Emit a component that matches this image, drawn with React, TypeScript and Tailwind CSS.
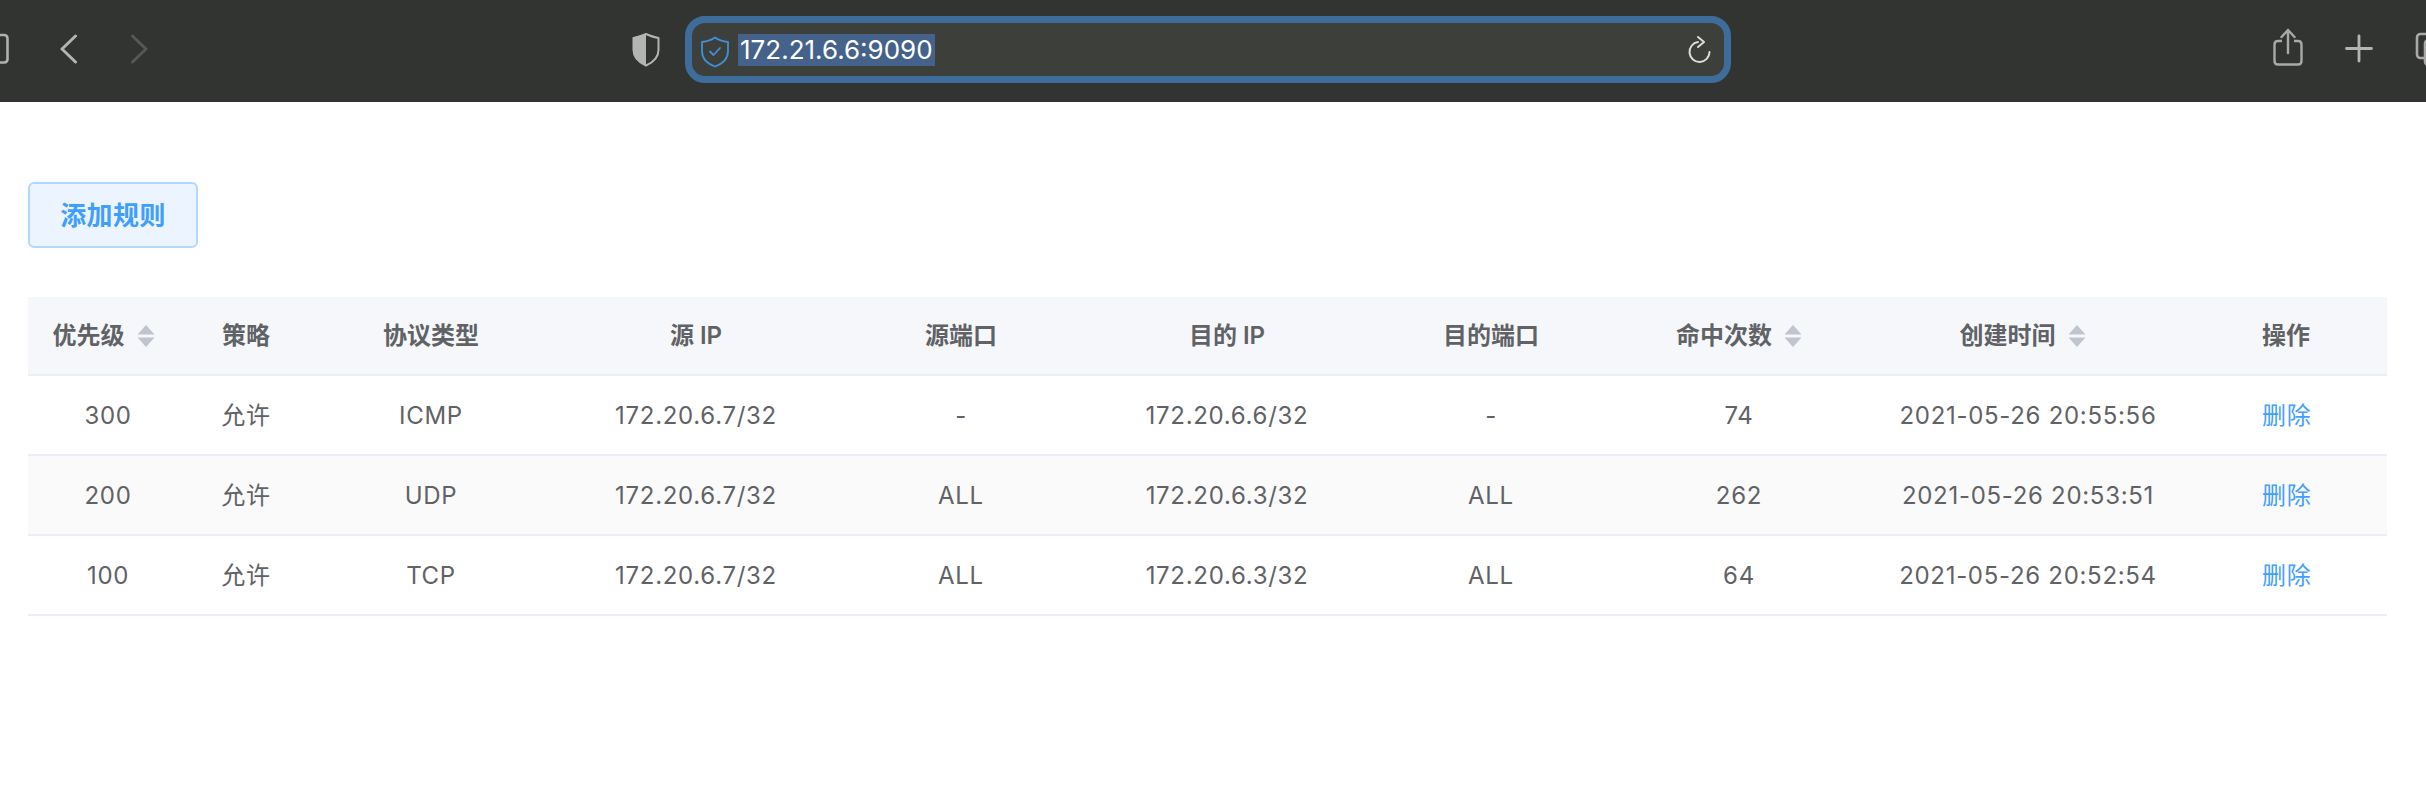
const rows = [
  { priority: 300, protocol: "ICMP", port: "-", dest: "172.20.6.6/32", hits: 74, time: "2021-05-26 20:55:56" },
  { priority: 200, protocol: "UDP", port: "ALL", dest: "172.20.6.3/32", hits: 262, time: "2021-05-26 20:53:51" },
  { priority: 100, protocol: "TCP", port: "ALL", dest: "172.20.6.3/32", hits: 64, time: "2021-05-26 20:52:54" },
];

function SortIcon() {
  return (
    <svg width="18" height="24" viewBox="0 0 18 24" className="ml-[12px] inline-block shrink-0">
      <path d="M9 1 L17.5 10.5 L0.5 10.5 Z" fill="#c0c4cc" />
      <path d="M9 23 L17.5 13.5 L0.5 13.5 Z" fill="#c0c4cc" />
    </svg>
  );
}

// toolbar icons use page y coordinates in a 102px tall viewBox
function Toolbar() {
  return (
    <div className="flex h-[102px] items-start overflow-hidden bg-[#323431]">
      <svg width="9" height="102" viewBox="0 0 9 102" className="shrink-0">
        <path d="M-6 35 H4 Q7.5 35 7.5 38.5 V59 Q7.5 62.5 4 62.5 H-6" fill="none" stroke="#b0b1ae" strokeWidth="2.6" />
      </svg>
      <svg width="18" height="102" viewBox="0 0 18 102" className="ml-[51px] shrink-0">
        <path d="M15.5 36 L2 49 L15.5 62" fill="none" stroke="#b4b5b2" strokeWidth="3" strokeLinecap="round" strokeLinejoin="round" />
      </svg>
      <svg width="18" height="102" viewBox="0 0 18 102" className="ml-[52px] shrink-0">
        <path d="M2.5 36 L16 49 L2.5 62" fill="none" stroke="#565855" strokeWidth="3" strokeLinecap="round" strokeLinejoin="round" />
      </svg>
      <svg width="28" height="102" viewBox="0 0 28 102" className="ml-[484px] shrink-0">
        <path d="M14 34 C18 36 22 37 26.5 38 V50 C26.5 57 22 62 14 65.5 C6 62 1.5 57 1.5 50 V38 C6 37 10 36 14 34 Z" fill="none" stroke="#b4b5b2" strokeWidth="2" strokeLinejoin="round" />
        <path d="M14 34 C10 36 6 37 1.5 38 V50 C1.5 57 6 62 14 65.5 Z" fill="#b4b5b2" />
      </svg>
      <div className="ml-[25px] mt-[16px] flex h-[67px] w-[1046px] shrink-0 items-center rounded-[20px] border-[7px] border-[#3f6d9b] bg-[#3d3f3b] pl-[9px] pr-[12px]">
        <svg width="28" height="32" viewBox="0 0 28 32" className="mt-[5px] shrink-0">
          <path d="M14 1.5 C18 4.5 22 5.5 27 6 V15 C27 23 21 28 14 30.5 C7 28 1 23 1 15 V6 C6 5.5 10 4.5 14 1.5 Z" fill="none" stroke="#3a92d8" strokeWidth="1.8" strokeLinejoin="round" />
          <path d="M9 15.5 L12.5 19 L19 12" fill="none" stroke="#3a92d8" strokeWidth="1.8" strokeLinecap="round" strokeLinejoin="round" />
        </svg>
        <span className="ml-[9px] bg-[#44628a] px-[2px] text-[26px] leading-[32px] text-white">172.21.6.6:9090</span>
        <svg width="24" height="30" viewBox="0 0 24 30" className="ml-auto shrink-0">
          <path d="M10 7 A10 10 0 1 0 21.5 17" fill="none" stroke="#dcdcda" strokeWidth="2" strokeLinecap="round" />
          <path d="M10 2 L16 7 L10 12" fill="none" stroke="#dcdcda" strokeWidth="2" strokeLinecap="round" strokeLinejoin="round" />
        </svg>
      </div>
      <svg width="30" height="102" viewBox="0 0 30 102" className="ml-[542px] shrink-0">
        <path d="M9 41 H5 Q1.5 41 1.5 44.5 V61 Q1.5 64.5 5 64.5 H25 Q28.5 64.5 28.5 61 V44.5 Q28.5 41 25 41 H21" fill="none" stroke="#a9aaa7" strokeWidth="2.4" />
        <path d="M15 53 V30 M8.5 37 L15 30 L21.5 37" fill="none" stroke="#a9aaa7" strokeWidth="2.4" strokeLinecap="round" strokeLinejoin="round" />
      </svg>
      <svg width="28" height="102" viewBox="0 0 28 102" className="ml-[42px] shrink-0">
        <path d="M14 36 V61 M1.5 48.5 H26.5" fill="none" stroke="#b4b5b2" strokeWidth="2.8" strokeLinecap="round" />
      </svg>
      <svg width="14" height="102" viewBox="0 0 14 102" className="ml-[42px] shrink-0">
        <rect x="2" y="34" width="24" height="24" rx="3.5" fill="none" stroke="#a9aaa7" strokeWidth="2.6" />
        <rect x="10" y="40" width="24" height="25" rx="3.5" fill="#323431" stroke="#a9aaa7" strokeWidth="2.6" />
      </svg>
    </div>
  );
}

export default function App() {
  return (
    <div className="h-[790px] w-[2426px] overflow-hidden bg-white font-['Inter','Noto_Sans_CJK_SC',sans-serif]">
      <Toolbar />
      <div className="pl-[28px] pr-[39px] pt-[80px]">
        <button className="flex h-[66px] w-[170px] items-center justify-center rounded-[6px] border-2 border-[#b3d8ff] bg-[#ecf5ff] text-[26px] font-semibold tracking-[0.4px] text-[#409eff]">
          添加规则
        </button>
        <table className="mt-[49px] w-full table-fixed border-collapse text-center text-[24px] text-[#606266]">
          <colgroup>
            <col className="w-[160px]" />
            <col className="w-[116px]" />
            <col className="w-[254px]" />
            <col className="w-[276px]" />
            <col className="w-[254px]" />
            <col className="w-[278px]" />
            <col className="w-[250px]" />
            <col className="w-[246px]" />
            <col className="w-[332px]" />
            <col />
          </colgroup>
          <thead>
            <tr className="h-[78px] border-b-2 border-[#ebeef5] bg-[#f5f7fa]">
              <th className="pr-[9px] font-semibold"><span className="inline-flex items-center">优先级<SortIcon /></span></th>
              <th className="font-semibold">策略</th>
              <th className="font-semibold">协议类型</th>
              <th className="font-semibold">源 IP</th>
              <th className="font-semibold">源端口</th>
              <th className="font-semibold">目的 IP</th>
              <th className="font-semibold">目的端口</th>
              <th className="font-semibold"><span className="inline-flex items-center">命中次数<SortIcon /></span></th>
              <th className="pr-[11px] font-semibold"><span className="inline-flex items-center">创建时间<SortIcon /></span></th>
              <th className="pl-[68px] text-left font-semibold">操作</th>
            </tr>
          </thead>
          <tbody className="tracking-[0.7px]">
            {rows.map((row, i) => (
              <tr key={row.priority} className={`h-[80px] border-b-2 border-[#ebeef5] ${i === 1 ? "bg-[#fafafa]" : "bg-white"}`}>
                <td className="pt-[2px]">{row.priority}</td>
                <td className="pt-[2px]">允许</td>
                <td className="pt-[2px]">{row.protocol}</td>
                <td className="pt-[2px]">172.20.6.7/32</td>
                <td className="pt-[2px]">{row.port}</td>
                <td className="pt-[2px]">{row.dest}</td>
                <td className="pt-[2px]">{row.port}</td>
                <td className="pt-[2px]">{row.hits}</td>
                <td className="pt-[2px]">{row.time}</td>
                <td className="pl-[68px] pt-[2px] text-left text-[#409eff]">删除</td>
              </tr>
            ))}
          </tbody>
        </table>
      </div>
    </div>
  );
}
